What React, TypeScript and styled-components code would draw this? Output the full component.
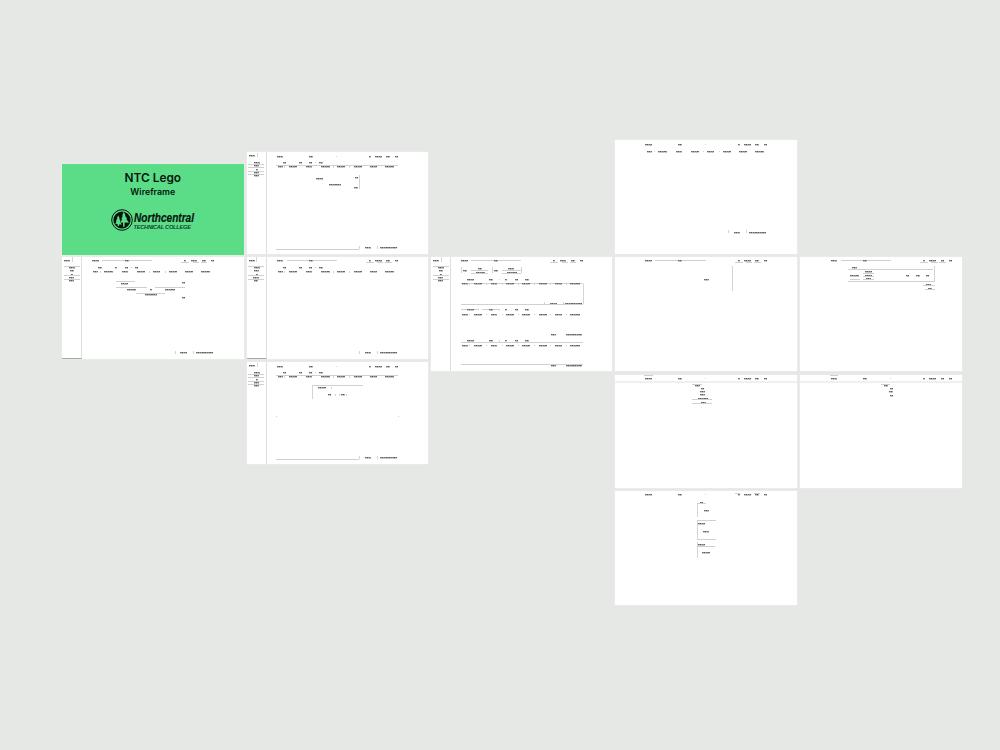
import React from "react";
import styled, { createGlobalStyle } from "styled-components";

const GlobalStyle = createGlobalStyle`
  body { margin: 0; background: #e6e8e6; }
`;

const Canvas = styled.main`
  position: relative;
  width: 1000px;
  height: 750px;
  overflow: hidden;
  background: #e6e8e6;
`;

const Artboard = styled.section<{ $x: number; $y: number; $w: number; $h: number }>`
  position: absolute;
  left: ${(p) => p.$x}px;
  top: ${(p) => p.$y}px;
  width: ${(p) => p.$w}px;
  height: ${(p) => p.$h}px;
  display: flex;
  background: #fff;
  box-shadow: 0 0 1px #f4f5f4;
`;

const Cover = styled(Artboard)`
  flex-direction: column;
  align-items: center;
  background: #5bdd88;
  color: #07150d;
  font-family: Inter, "Liberation Sans", sans-serif;
`;

const Title = styled.h1`
  margin: 7px 0 0;
  font-size: 11.9px;
  line-height: 14px;
  font-weight: 600;
`;

const Subtitle = styled.h2`
  margin: 1px 0 0;
  font-size: 8.8px;
  line-height: 12px;
  font-weight: 600;
`;

const Logo = styled.svg`
  display: block;
  flex: none;
  margin-top: 10px;
  overflow: visible;
`;

const Sidebar = styled.aside<{ $base: boolean }>`
  flex: none;
  box-sizing: border-box;
  width: 20px;
  border-right: 1px solid #dedede;
  border-bottom: ${(p) => (p.$base ? "1px solid #a9a9a9" : "0")};
`;

const Content = styled.div`
  flex: 1;
  min-width: 0;
`;

const Row = styled.div<{ $gap: number }>`
  display: flex;
  align-items: flex-start;
  height: 0;
  padding-top: ${(p) => p.$gap}px;
`;

const Mark = styled.i<{ $gap: number }>`
  flex: none;
  margin-top: -0.5px;
  margin-left: ${(p) => p.$gap}px;
`;

const Label = styled(Mark)<{ $w: number }>`
  width: ${(p) => p.$w}px;
  height: 2px;
  background:
    linear-gradient(90deg, #6a6a6a 0 1px, #8c8c8c 1px 2px, #5c5c5c 2px 3px, #a2a2a2 3px 4px, #747474 4px 5px, #909090 5px 6px, #666 6px 7px) 0 0 / 7px 1px repeat-x,
    linear-gradient(90deg, #cfcfcf 0 2px, #bdbdbd 2px 3px) 0 1px / 3px 1px repeat-x;
`;

const Rule = styled(Mark)<{ $w: number }>`
  width: ${(p) => p.$w}px;
  height: 1px;
  background: #d0d0d0;
`;

const Post = styled(Mark)<{ $h: number }>`
  width: 1px;
  height: ${(p) => p.$h}px;
  background: #d4d4d4;
`;

const Band = styled(Rule)`
  height: 2px;
  background: #f0f0f0;
`;

/* Wireframe measures are in units of a third of a pixel. */
const UNIT = 3;

type Part = { kind: "label" | "rule" | "post" | "band"; from: number; size: number };
type Line = { y: number; parts: Part[] };

const t = (a: number, b: number): Part => ({ kind: "label", from: a, size: b - a });
const r = (a: number, b: number): Part => ({ kind: "rule", from: a, size: b - a });
const v = (a: number, h = 7): Part => ({ kind: "post", from: a, size: h });
const band = (w: number): Part => ({ kind: "band", from: 0, size: w });
const line = (y: number, ...parts: Part[]): Line => ({ y, parts });

function Wireframe({ lines, left = 0 }: { lines: Line[]; left?: number }) {
  let y = 0;
  return (
    <>
      {[...lines].sort((a, b) => a.y - b.y).map((l, i) => {
        const gap = (l.y - y) / UNIT;
        y = l.y;
        let x = left;
        return (
          <Row key={i} $gap={gap}>
            {l.parts.map((p, j) => {
              const g = (p.from - x) / UNIT;
              x = p.from + (p.kind === "post" ? UNIT : p.size);
              const s = p.size / UNIT;
              if (p.kind === "label") return <Label key={j} $gap={g} $w={s} />;
              if (p.kind === "post") return <Post key={j} $gap={g} $h={s} />;
              if (p.kind === "band") return <Band key={j} $gap={g} $w={s} />;
              return <Rule key={j} $gap={g} $w={s} />;
            })}
          </Row>
        );
      })}
    </>
  );
}

const header = (y: number, open: boolean, dx = 0): Line[] => [
  line(y, t(90 + dx, 110 + dx), t(188 + dx, 200 + dx), v(268 + dx, 3),
    t(367 + dx, 373 + dx), t(386 + dx, 406 + dx), t(420 + dx, 431 + dx), t(446 + dx, 455 + dx)),
  ...(open
    ? [
        line(y - 1, r(120 + dx, 268 + dx)),
        line(y + 4, r(358 + dx, 382 + dx), r(392 + dx, 411 + dx), r(416 + dx, 436 + dx)),
      ]
    : []),
];

const tabs = (y: number): Line[] => [
  line(y, t(109, 120), t(158, 166), t(188, 197), v(206, 3), t(218, 229)),
];

const columns = (y: number, dx = 0): Line[] => [
  line(y, t(93 + dx, 108 + dx), v(113 + dx, 4), t(127 + dx, 152 + dx), t(179 + dx, 198 + dx),
    t(224 + dx, 250 + dx), v(260 + dx, 4), t(273 + dx, 295 + dx), v(309 + dx, 4),
    t(322 + dx, 346 + dx), t(370 + dx, 393 + dx), t(416 + dx, 444 + dx)),
];

const footer = (y: number, ruled: boolean, dx = 0): Line[] => [
  line(y - 4, v(338 + dx, 9), v(393 + dx, 9)),
  line(y, t(355 + dx, 375 + dx), t(401 + dx, 452 + dx)),
  ...(ruled ? [line(y + 6, r(89, 338))] : []),
];

const sideClosed: Line[] = [
  line(3, v(30, 12)),
  line(11, t(7, 26)),
  line(32, t(22, 40)),
  line(38, r(5, 53)),
  line(42, t(23, 37)),
  line(48, r(5, 53)),
  line(52, t(27, 34)),
  line(58, r(5, 53)),
  line(61, t(21, 38)),
  line(67, r(5, 53)),
  line(71, t(22, 37)),
];

const sideOpen: Line[] = [
  line(0, v(29, 16)),
  line(11, t(7, 25)),
  line(28, r(5, 53)),
  line(32, t(22, 40)),
  line(42, t(23, 37)),
  line(52, t(27, 34)),
  line(57, r(5, 53)),
  line(61, t(20, 37)),
  line(67, r(5, 53)),
  line(72, t(22, 36)),
];

const grid = (y: number): Line =>
  line(y, t(94, 110), v(113, 4), t(128, 153), v(164, 4), t(180, 199), v(212, 4), t(226, 250),
    v(260, 4), t(274, 297), v(308, 4), t(323, 349), v(357, 4), t(371, 394), v(405, 4), t(418, 446));

const filters = (y: number): Line =>
  line(y, t(107, 128), t(174, 185), v(205, 5), t(221, 229), t(253, 260), t(283, 293));

type Board = { x: number; y: number; w: number; h: number; side?: Line[]; base?: boolean; lines: Line[] };

const dashboardClosed = [...header(12, false), ...tabs(32), line(40, r(89, 455)), ...columns(45), ...footer(287, true)];
const dashboardOpen = [...header(12, true), ...tabs(32), ...columns(45), ...footer(287, false)];

const boards: Board[] = [
  {
    x: 246.5, y: 152, w: 181.5, h: 102, side: sideClosed,
    lines: [
      ...dashboardClosed,
      line(72, v(337, 41)),
      line(76, t(325, 334)),
      line(79, t(208, 230)),
      line(97, t(247, 283)),
      line(106, t(323, 334)),
    ],
  },
  {
    x: 62, y: 257, w: 181.5, h: 102, side: sideOpen, base: true,
    lines: [
      ...dashboardOpen,
      line(75, r(163, 218)),
      line(78, t(359, 368)),
      line(81, t(178, 199)),
      line(91, r(163, 254), r(279, 369)),
      line(98, t(194, 221), t(263, 270), t(308, 340)),
      line(109, r(222, 310)),
      line(113, t(250, 286)),
      line(122, t(359, 368)),
    ],
  },
  { x: 246.5, y: 257, w: 181.5, h: 102, side: sideOpen, base: true, lines: dashboardOpen },
  {
    x: 246.5, y: 362, w: 181.5, h: 102, side: sideClosed,
    lines: [
      ...dashboardClosed,
      line(70, r(196, 349)),
      line(71, v(196, 42)),
      line(78, t(213, 238), v(254, 6)),
      line(98, t(244, 255), v(267, 6), v(278, 6), t(284, 296), v(300, 6)),
      line(164, r(88, 91), r(454, 457)),
    ],
  },
  {
    x: 431, y: 257, w: 181, h: 114, side: sideOpen,
    lines: [
      ...header(12, true),
      line(31, v(90, 18), v(182, 18), v(270, 18)),
      line(34, t(142, 154), t(232, 248)),
      line(40, t(96, 107), t(189, 200)),
      line(41, r(119, 172), r(213, 270)),
      line(47, t(135, 162), t(227, 257)),
      line(51, r(119, 172), r(213, 270)),
      filters(67),
      line(79, r(89, 456)),
      grid(81),
      line(82, v(455, 60)),
      ...footer(141, false, 2),
      line(143, r(89, 456)),
      line(157, r(90, 144), r(154, 206)),
      filters(159),
      grid(173),
      line(234, t(359, 376), t(405, 452)),
      filters(252),
      line(258, r(89, 456)),
      grid(266),
      line(322, r(89, 456)),
      line(327, t(359, 376), t(405, 452)),
    ],
  },
  { x: 615, y: 140, w: 182, h: 114, lines: [...header(12, false, 1), ...columns(35, 3), ...footer(277, false, 1)] },
  {
    x: 615, y: 257, w: 182, h: 114,
    lines: [...header(12, true, 1), line(29, v(352, 75)), line(67, t(266, 281))],
  },
  {
    x: 800, y: 257, w: 162, h: 114,
    lines: [
      ...header(12, true, 2),
      line(29, v(403, 45)),
      line(32, t(157, 170)),
      line(37, r(144, 400)),
      line(45, t(195, 216)),
      line(49, r(190, 223)),
      line(55, t(151, 176), t(195, 216), t(319, 327), t(347, 360), t(379, 386)),
      line(59, r(190, 223)),
      line(64, t(199, 212)),
      line(67, r(149, 181), r(190, 223)),
      line(74, r(144, 405)),
      line(83, t(378, 393)),
      line(87, r(370, 405)),
      line(94, t(383, 397)),
      line(98, r(376, 405)),
    ],
  },
  {
    x: 615, y: 375, w: 182, h: 113,
    lines: [
      ...header(10, false, 1),
      line(2, r(88, 113)),
      line(19, band(546)),
      line(29, r(232, 262)),
      line(32, t(241, 255)),
      line(40, t(259, 267)),
      line(51, t(255, 269)),
      line(60, t(255, 269)),
      line(70, t(250, 279)),
      line(73, r(232, 292)),
      line(82, t(257, 272)),
      line(86, r(232, 292)),
    ],
  },
  {
    x: 800, y: 375, w: 162, h: 113,
    lines: [
      ...header(10, false, 2),
      line(2, r(90, 114)),
      line(19, band(486)),
      line(29, r(243, 270)),
      line(32, t(252, 264)),
      line(40, t(270, 278)),
      line(51, t(266, 280)),
      line(62, t(270, 278)),
    ],
  },
  {
    x: 615, y: 490.5, w: 182, h: 114.5,
    lines: [
      ...header(12, false, 1),
      line(9, r(361, 376), r(418, 436)),
      line(35, t(255, 264)),
      line(39, r(245, 273)),
      line(42, v(245, 38)),
      line(59, t(266, 281)),
      line(91, r(245, 302)),
      line(92, v(245, 54)),
      line(98, t(249, 270)),
      line(122, t(264, 281)),
      line(146, r(245, 302)),
      line(156, v(245, 48)),
      line(161, t(249, 270)),
      line(168, r(245, 300)),
      line(185, t(262, 285)),
    ],
  },
];

function CollegeLogo() {
  return (
    <Logo width="90" height="24" viewBox="-3 0 90 24">
      <circle cx="11" cy="12" r="10.3" fill="none" stroke="#07150d" strokeWidth="1" />
      <circle cx="11" cy="12" r="8.6" fill="#07150d" />
      <path d="M12.6 3.8 14.6 7.4 13.9 7.4 16.2 10.8 15.2 10.8 18 14.8 13.6 14.5 13.6 18.4 12.1 19 12 14.6 9.2 14.8 11.2 11.2 10.3 11.2 11.8 7.8 11.2 7.8Z" fill="#5bdd88" />
      <path d="M7.2 7.4 8.8 10.6 8.1 10.5 9.8 13.6 8.9 13.5 10.6 16.6 8 16.4 8 18.4 6.6 17.5 6.6 16.1 4.2 15.7 5.6 13.2 4.8 13.1 6.4 10.4 5.8 10.4Z" fill="#5bdd88" />
      <text x="23" y="14" fontFamily="'Liberation Sans', sans-serif" fontSize="12" fontWeight="700" fontStyle="italic" fill="#07150d" stroke="#07150d" strokeWidth=".2" textLength="60" lengthAdjust="spacingAndGlyphs">Northcentral</text>
      <text x="22.5" y="21" fontFamily="'Liberation Sans', sans-serif" fontSize="5.7" fontWeight="700" fontStyle="italic" fill="#0f4526" textLength="57.5" lengthAdjust="spacing">TECHNICAL COLLEGE</text>
    </Logo>
  );
}

export default function App() {
  return (
    <>
      <GlobalStyle />
      <Canvas>
        <Cover $x={62} $y={163.5} $w={181.5} $h={91}>
          <Title>NTC Lego</Title>
          <Subtitle>Wireframe</Subtitle>
          <CollegeLogo />
        </Cover>
        {boards.map((b, i) => (
          <Artboard key={i} $x={b.x} $y={b.y} $w={b.w} $h={b.h}>
            {b.side && (
              <Sidebar $base={!!b.base}>
                <Wireframe lines={b.side} />
              </Sidebar>
            )}
            <Content>
              <Wireframe lines={b.lines} left={b.side ? 20 * UNIT : 0} />
            </Content>
          </Artboard>
        ))}
      </Canvas>
    </>
  );
}
